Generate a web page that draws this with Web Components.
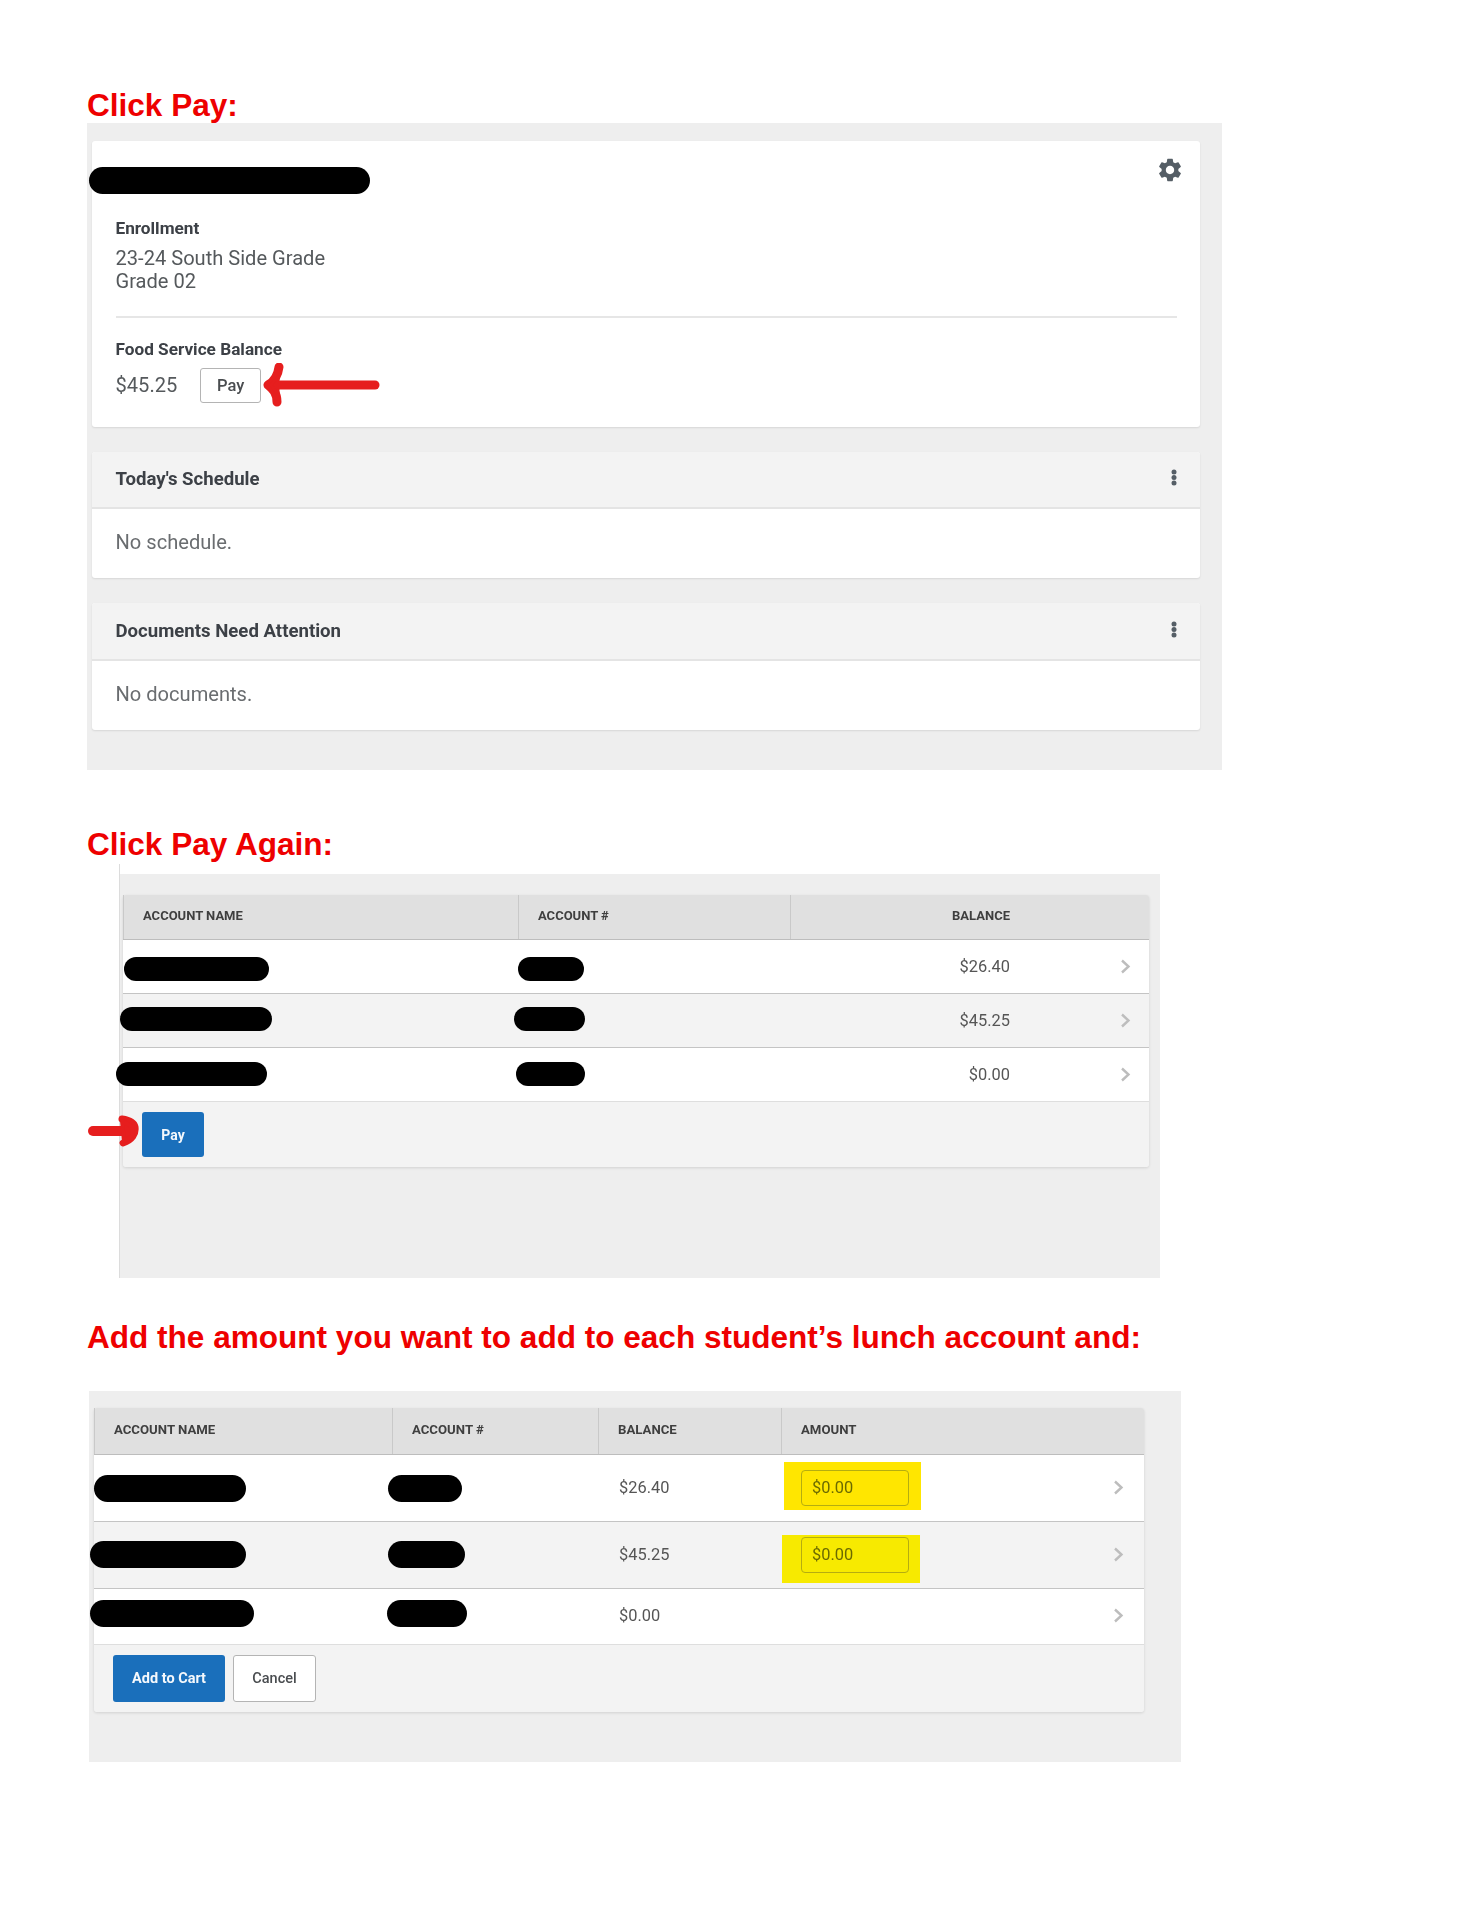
<!DOCTYPE html>
<html lang="en">
<head>
<meta charset="utf-8">
<title>Lunch account</title>
<style>
    html, body { margin: 0; background: #fff; }
    body { font-family: Roboto, "Liberation Sans", sans-serif; color: #4a4a4a; }
</style>
</head>
<body>
<guide-page>
    <guide-heading>Click Pay:</guide-heading>
    <guide-panel style="--ml:87px;--w:1135px;--pad:18px 22px 40px 5px;--gap:25px;height:647px">
        <student-card>
            <redact-pill style="left:-3px;top:26px;width:281px;height:27px"></redact-pill>
            <hand-arrow kind="left" style="left:170px;top:222px"></hand-arrow>
        </student-card>
        <section-card title="Today's Schedule" head="57" body="69">No schedule.</section-card>
        <section-card title="Documents Need Attention" head="58" body="69">No documents.</section-card>
    </guide-panel>

    <guide-heading style="--top:55px">Click Pay Again:</guide-heading>
    <guide-panel style="--ml:119px;--w:1041px;--top:2px;--pad:31px 11px 0 3px;--line:1px;--inset:10px;height:414px">
        <account-table columns="395px 272px 1fr" style="--head:45px;--foot:65px">
            <table-head slot="head" labels="ACCOUNT NAME|ACCOUNT #|BALANCE" aligns="left|left|right" style="--balance-right:139px;--head-fs:13px"></table-head>
            <account-row height="54" balance="$26.40" mode="right">
                <redact-pill style="left:1px;top:17px;width:145px;height:24px"></redact-pill>
                <redact-pill style="left:395px;top:17px;width:66px;height:24px"></redact-pill>
            </account-row>
            <account-row height="54" balance="$45.25" mode="right" alt>
                <redact-pill style="left:-3px;top:13px;width:152px;height:24px"></redact-pill>
                <redact-pill style="left:391px;top:13px;width:71px;height:24px"></redact-pill>
            </account-row>
            <account-row height="54" balance="$0.00" mode="right" last>
                <redact-pill style="left:-7px;top:14px;width:151px;height:24px"></redact-pill>
                <redact-pill style="left:393px;top:14px;width:69px;height:24px"></redact-pill>
            </account-row>
            <table-foot slot="foot" style="--pad-top:10px">
                <guide-button primary style="--bw:62px;--bh:45px;--fs:14px">Pay</guide-button>
                <hand-arrow kind="right" style="left:-35px;top:11px"></hand-arrow>
            </table-foot>
        </account-table>
    </guide-panel>

    <guide-heading style="--top:40px">Add the amount you want to add to each student’s lunch account and:</guide-heading>
    <guide-panel style="--ml:89px;--w:1092px;--pad:17px 37px 0 5px;--top:36px;height:371px">
        <account-table columns="298px 206px 183px 1fr" style="--head:47px;--foot:67px">
            <table-head slot="head" labels="ACCOUNT NAME|ACCOUNT #|BALANCE|AMOUNT" aligns="left|left|left|left"></table-head>
            <account-row height="67" balance="$26.40" mode="amount" amount="$0.00" mark="#ffe600" mark-left="690" mark-top="7" mark-width="137">
                <redact-pill style="left:0;top:20px;width:152px;height:27px"></redact-pill>
                <redact-pill style="left:294px;top:20px;width:74px;height:27px"></redact-pill>
            </account-row>
            <account-row height="67" balance="$45.25" mode="amount" amount="$0.00" mark="#f7ea00" mark-left="688" mark-top="13" mark-width="138" alt>
                <redact-pill style="left:-4px;top:19px;width:156px;height:27px"></redact-pill>
                <redact-pill style="left:294px;top:19px;width:77px;height:27px"></redact-pill>
            </account-row>
            <account-row height="56" balance="$0.00" mode="amount" last>
                <redact-pill style="left:-4px;top:11px;width:164px;height:27px"></redact-pill>
                <redact-pill style="left:293px;top:11px;width:80px;height:27px"></redact-pill>
            </account-row>
            <table-foot slot="foot" style="--pad-top:10px">
                <guide-button primary style="--bw:112px;--bh:47px;--fs:14.5px">Add to Cart</guide-button>
                <guide-button style="--bw:83px;--bh:47px;--fs:14.5px">Cancel</guide-button>
            </table-foot>
        </account-table>
    </guide-panel>
</guide-page>

<script>
class GuidePage extends HTMLElement {
    constructor() {
        super();
        this.attachShadow({ mode: 'open' });
        this.shadowRoot.innerHTML = `
        <style>
            :host { display: flex; flex-direction: column; padding-top: 86px; min-height: 1834px; }
        </style>
        <slot></slot>`;
    }
}

class GuideHeading extends HTMLElement {
    constructor() {
        super();
        this.attachShadow({ mode: 'open' });
        this.shadowRoot.innerHTML = `
        <style>
            :host {
                display: block;
                margin: var(--top, 0) 0 -2px 87px;
                font: bold 31.55px/39px "Liberation Sans", Arial, sans-serif;
                color: #ee0000;
            }
        </style>
        <slot></slot>`;
    }
}

class GuidePanel extends HTMLElement {
    constructor() {
        super();
        this.attachShadow({ mode: 'open' });
        this.shadowRoot.innerHTML = `
        <style>
            :host {
                display: block;
                box-sizing: border-box;
                margin-left: var(--ml);
                margin-top: var(--top, 0);
                width: var(--w);
                border-left: var(--line, 0) solid #dcdcdc;
                background: linear-gradient(#fff 0 var(--inset, 0), #eee var(--inset, 0));
                filter: blur(.35px);
            }
            .inner {
                display: flex;
                flex-direction: column;
                gap: var(--gap, 0);
                padding: var(--pad);
            }
        </style>
        <div class="inner"><slot></slot></div>`;
    }
}

class StudentCard extends HTMLElement {
    constructor() {
        super();
        this.attachShadow({ mode: 'open' });
        this.shadowRoot.innerHTML = `
        <style>
            :host {
                display: block;
                position: relative;
                background: #fff;
                border-radius: 3px;
                box-shadow: 0 1px 2px rgba(0,0,0,.1);
                padding: 76px 23px 24px 23.5px;
                font-size: 20.1px;
                color: #55595c;
            }
            .label { font-size: 17.2px; font-weight: 700; line-height: 22px; color: #3c4046; }
            .value { line-height: 23px; margin-top: 8px; }
            hr { border: 0; border-top: 2px solid #e6e6e6; margin: 23px 0 20px; }
            .balance { display: flex; align-items: center; gap: 23px; margin-top: 8px; }
            .amount { margin-top: -2px; }
            .gear { position: absolute; right: 16px; top: 15px; width: 28px; height: 28px; fill: #555e66; }
        </style>
        <svg class="gear" viewBox="0 0 24 24"><path d="M19.14 12.94c.04-.3.06-.61.06-.94 0-.32-.02-.64-.07-.94l2.03-1.58c.18-.14.23-.41.12-.61l-1.92-3.32c-.12-.22-.37-.29-.59-.22l-2.39.96c-.5-.38-1.03-.7-1.62-.94l-.36-2.54c-.04-.24-.24-.41-.48-.41h-3.84c-.24 0-.43.17-.47.41l-.36 2.54c-.59.24-1.13.57-1.62.94l-2.39-.96c-.22-.08-.47 0-.59.22L2.74 8.87c-.12.21-.08.47.12.61l2.03 1.58c-.05.3-.09.63-.09.94s.02.64.07.94l-2.03 1.58c-.18.14-.23.41-.12.61l1.92 3.32c.12.22.37.29.59.22l2.39-.96c.5.38 1.03.7 1.62.94l.36 2.54c.05.24.24.41.48.41h3.84c.24 0 .44-.17.47-.41l.36-2.54c.59-.24 1.13-.56 1.62-.94l2.39.96c.22.08.47 0 .59-.22l1.92-3.32c.12-.22.07-.47-.12-.61l-2.01-1.58zM12 15.6c-1.98 0-3.6-1.62-3.6-3.6s1.62-3.6 3.6-3.6 3.6 1.62 3.6 3.6-1.62 3.6-3.6 3.6z"/></svg>
        <div class="label">Enrollment</div>
        <div class="value">23-24 South Side Grade<br>Grade 02</div>
        <hr>
        <div class="label">Food Service Balance</div>
        <div class="balance">
            <span class="amount">$45.25</span>
            <guide-button style="--bw:61px;--bh:35px;--fs:16.5px">Pay</guide-button>
        </div>
        <slot></slot>`;
    }
}

class SectionCard extends HTMLElement {
    constructor() {
        super();
        this.attachShadow({ mode: 'open' });
        const head = this.getAttribute('head');
        const body = this.getAttribute('body');
        this.shadowRoot.innerHTML = `
        <style>
            :host {
                display: block;
                background: #fff;
                border-radius: 3px;
                box-shadow: 0 1px 2px rgba(0,0,0,.1);
                overflow: hidden;
            }
            .head {
                display: flex;
                align-items: center;
                justify-content: space-between;
                box-sizing: border-box;
                height: ${head}px;
                padding: 0 23px 1px 23.5px;
                background: #f3f3f3;
                border-bottom: 2px solid #e4e4e4;
                font-size: 18.6px;
                font-weight: 700;
                color: #3c4046;
            }
            .dots { width: 6px; height: 17px; fill: #555e66; margin-bottom: 3px; }
            .body {
                display: flex;
                align-items: center;
                height: ${body}px;
                padding: 0 23px 3px 23.5px;
                box-sizing: border-box;
                font-size: 20.1px;
                color: #6a6d70;
            }
        </style>
        <div class="head">
            <span>${this.getAttribute('title')}</span>
            <svg class="dots" viewBox="0 0 6 17"><circle cx="3" cy="3" r="2.5"/><circle cx="3" cy="8.5" r="2.5"/><circle cx="3" cy="14" r="2.5"/></svg>
        </div>
        <div class="body"><slot></slot></div>`;
    }
}

class AccountTable extends HTMLElement {
    constructor() {
        super();
        this.attachShadow({ mode: 'open' });
        this.shadowRoot.innerHTML = `
        <style>
            :host {
                display: block;
                --columns: ${this.getAttribute('columns')};
                border-radius: 3px;
                box-shadow: 0 1px 3px rgba(0,0,0,.12);
            }
            .rows { display: flex; flex-direction: column; }
        </style>
        <slot name="head"></slot>
        <div class="rows"><slot></slot></div>
        <slot name="foot"></slot>`;
    }
}

class TableHead extends HTMLElement {
    constructor() {
        super();
        this.attachShadow({ mode: 'open' });
        const aligns = this.getAttribute('aligns').split('|');
        const cells = this.getAttribute('labels').split('|').map((label, i) =>
            `<div class="cell ${aligns[i]}"><span>${label}</span></div>`).join('');
        this.shadowRoot.innerHTML = `
        <style>
            :host {
                display: grid;
                grid-template-columns: var(--columns);
                box-sizing: border-box;
                height: var(--head);
                background: #e0e0e0;
                border-bottom: 1px solid #bdbdbd;
                border-radius: 3px 3px 0 0;
                font-size: var(--head-fs, 13.2px);
                font-weight: 700;
                color: #3f3f3f;
            }
            .cell {
                display: flex;
                align-items: center;
                padding: 0 19px 3px;
                border-left: 1px solid #c9c9c9;
            }
            .cell:first-child { border-left: 0; padding-left: 18.5px; }
            .right { justify-content: flex-end; padding-right: var(--balance-right); }
        </style>
        ${cells}`;
    }
}

class AccountRow extends HTMLElement {
    constructor() {
        super();
        this.attachShadow({ mode: 'open' });
        const right = this.getAttribute('mode') === 'right';
        const amount = this.getAttribute('amount');
        const mark = this.getAttribute('mark');
        const last = this.hasAttribute('last');
        this.shadowRoot.innerHTML = `
        <style>
            :host {
                display: block;
                position: relative;
                box-sizing: border-box;
                height: ${this.getAttribute('height')}px;
                background: ${this.hasAttribute('alt') ? '#f3f3f3' : '#fff'};
                border-bottom: 1px solid ${last ? '#dedede' : '#c4c4c4'};
                font-size: 16.4px;
                color: #555;
            }
            .line {
                display: flex;
                align-items: center;
                height: 100%;
                margin-top: ${right ? -0.5 : -1}px;
            }
            .balance {
                ${right ? 'margin-left: auto; margin-right: 110px;' : 'margin-left: 525px; width: 162px;'}
            }
            .chevron {
                ${right ? 'margin-right: 18px;' : 'margin-left: auto; margin-right: 20px;'}
                width: 11px;
                height: 15px;
                fill: none;
                stroke: #bdbdbd;
                stroke-width: 2.4;
            }
            .mark {
                position: absolute;
                left: ${this.getAttribute('mark-left')}px;
                top: ${this.getAttribute('mark-top')}px;
                width: ${this.getAttribute('mark-width')}px;
                height: 48px;
                background: ${mark};
            }
            .input {
                position: absolute;
                left: 707px;
                top: 15px;
                box-sizing: border-box;
                width: 108px;
                height: 36px;
                padding: 0 0 2px 10px;
                display: flex;
                align-items: center;
                border: 1px solid #b5ad10;
                border-radius: 4px;
                color: #6b6a00;
            }
        </style>
        <div class="line">
            <span class="balance">${this.getAttribute('balance')}</span>
            <svg class="chevron" viewBox="0 0 11 15"><path d="M2 1.5 8.5 7.5 2 13.5"/></svg>
        </div>
        ${mark ? `<div class="mark"></div><div class="input">${amount}</div>` : ''}
        <slot></slot>`;
    }
}

class TableFoot extends HTMLElement {
    constructor() {
        super();
        this.attachShadow({ mode: 'open' });
        this.shadowRoot.innerHTML = `
        <style>
            :host {
                display: flex;
                gap: 8px;
                position: relative;
                box-sizing: border-box;
                height: var(--foot);
                padding: var(--pad-top) 19px 0;
                background: #f3f3f3;
                border-radius: 0 0 3px 3px;
            }
        </style>
        <slot></slot>`;
    }
}

class GuideButton extends HTMLElement {
    constructor() {
        super();
        this.attachShadow({ mode: 'open' });
        const primary = this.hasAttribute('primary');
        this.shadowRoot.innerHTML = `
        <style>
            :host {
                display: flex;
                align-items: center;
                justify-content: center;
                box-sizing: border-box;
                width: var(--bw);
                height: var(--bh);
                flex: none;
                border-radius: 3px;
                font-size: var(--fs);
                font-weight: ${primary ? 700 : 500};
                background: ${primary ? '#1a6fbb' : '#fff'};
                color: ${primary ? '#f4f8fc' : '#4a4d50'};
                border: ${primary ? '0' : '1px solid #b4b4b4'};
            }
        </style>
        <slot></slot>`;
    }
}

class RedactPill extends HTMLElement {
    constructor() {
        super();
        this.attachShadow({ mode: 'open' });
        this.shadowRoot.innerHTML = `
        <style>
            :host { display: block; position: absolute; background: #000; border-radius: 14px; }
        </style>`;
    }
}

class HandArrow extends HTMLElement {
    constructor() {
        super();
        this.attachShadow({ mode: 'open' });
        const left = this.getAttribute('kind') === 'left';
        const art = left
            ? `<svg width="118" height="44" viewBox="0 0 118 44"><g fill="none" stroke="#e61e1e" stroke-linecap="round" stroke-linejoin="round"><path d="M12 22H113" stroke-width="9"/><path d="M17 4C16 12 13 18 6 22 11 26 15 30 15 39" stroke-width="9"/><path d="M9 22 16 14V32Z" fill="#e61e1e" stroke-width="3"/></g></svg>`
            : `<svg width="56" height="34" viewBox="0 0 56 34"><g fill="none" stroke="#e61e1e" stroke-linecap="round" stroke-linejoin="round"><path d="M5 18H40" stroke-width="10"/><path d="M34 6C41 7 46 9 47 14 48 21 44 27 35 30" stroke-width="7"/><path d="M34 8 45 14 44 23 36 28Z" fill="#e61e1e" stroke-width="4"/></g></svg>`;
        this.shadowRoot.innerHTML = `
        <style>
            :host { display: block; position: absolute; line-height: 0; }
        </style>
        ${art}`;
    }
}

customElements.define('guide-page', GuidePage);
customElements.define('guide-heading', GuideHeading);
customElements.define('guide-panel', GuidePanel);
customElements.define('guide-button', GuideButton);
customElements.define('student-card', StudentCard);
customElements.define('section-card', SectionCard);
customElements.define('account-table', AccountTable);
customElements.define('table-head', TableHead);
customElements.define('account-row', AccountRow);
customElements.define('table-foot', TableFoot);
customElements.define('redact-pill', RedactPill);
customElements.define('hand-arrow', HandArrow);
</script>
</body>
</html>
